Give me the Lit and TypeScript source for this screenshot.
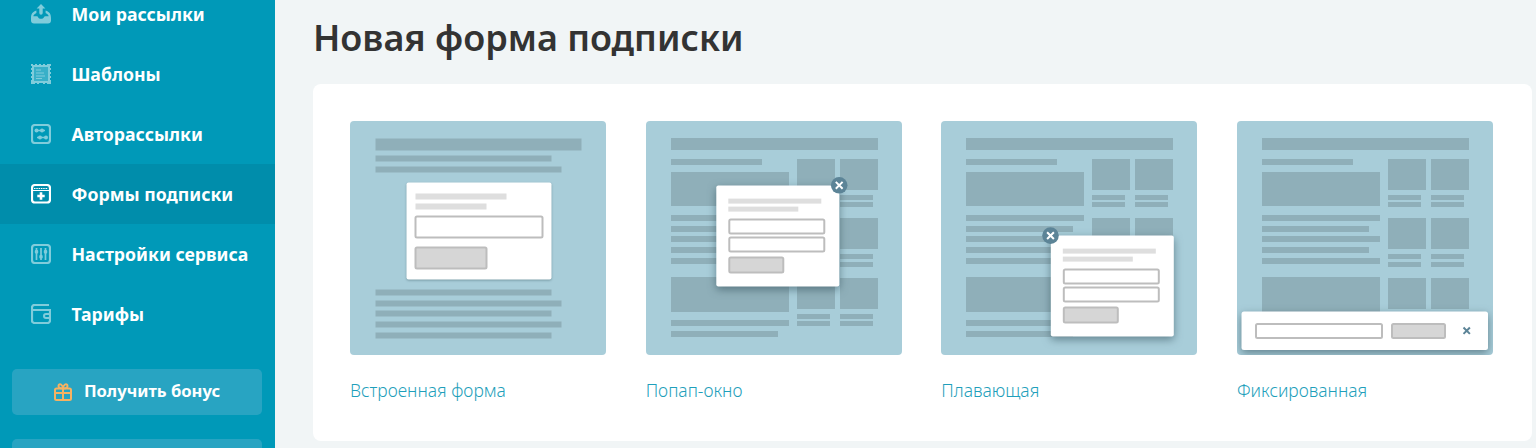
import { LitElement, html, css, svg } from "lit";
import { customElement } from "lit/decorators.js";

type R = [number, number, number, number];
const rects = (cls: string, list: R[]) =>
  list.map(([x, y, w, h]) => svg`<rect class=${cls} x=${x} y=${y} width=${w} height=${h}></rect>`);

const inset = (x: number, y: number, w: number, h: number, cls: string) =>
  svg`<rect class=${cls} x=${x + 1} y=${y + 1} width=${w - 2} height=${h - 2} rx="1.5"></rect>`;

const pageBg = () => [
  rects("blk", [
    [25, 17, 207, 12],
    [25, 38, 91, 6],
    [25, 51, 118, 34],
    [25, 94, 118, 6],
    [25, 105, 107, 6],
    [25, 115, 118, 6],
    [25, 126, 107, 6],
    [25, 137, 118, 6],
    [25, 156, 118, 35],
    [25, 199, 118, 6],
    [25, 210, 107, 6],
    [151, 38, 38, 31],
    [194, 38, 38, 31],
    [151, 74, 33, 5],
    [194, 74, 33, 5],
    [151, 81, 33, 5],
    [194, 81, 33, 5],
    [151, 97, 38, 31],
    [194, 97, 38, 31],
    [151, 133, 33, 5],
    [194, 133, 33, 5],
    [151, 141, 33, 5],
    [194, 141, 33, 5],
    [151, 157, 38, 31],
    [194, 157, 38, 31],
    [151, 193, 33, 5],
    [194, 193, 33, 5],
    [151, 200, 33, 5],
    [194, 200, 33, 5],
  ]),
];

const popup = (dx: number, dy: number, closeX: number, closeY: number) => svg`
  <g transform="translate(${dx} ${dy})">
    <rect class="pane shadow" x="71" y="64" width="123" height="101" rx="2"></rect>
    ${rects("ln", [[83, 77, 93, 5], [83, 85, 70, 5]])}
    ${inset(83, 97, 97, 16, "inp")}
    ${inset(83, 115, 97, 16, "inp")}
    ${inset(83, 135, 56, 17, "btn")}
  </g>
  <circle class="close" cx=${closeX} cy=${closeY} r="8.3"></circle>
  <path class="x-w" d="M${closeX - 3.4} ${closeY - 3.4}l6.8 6.8M${closeX + 3.4} ${closeY - 3.4}l-6.8 6.8"></path>
`;

const thumbs = [
  {
    label: "Встроенная форма",
    art: svg`
      <g transform="translate(.5 .5)">
      ${rects("blk", [
        [25, 17, 206, 12],
        [25, 34, 176, 6],
        [25, 45, 186, 6],
        [25, 168, 176, 6],
        [25, 179, 186, 6],
        [25, 189, 176, 6],
        [25, 200, 186, 6],
        [25, 211, 176, 6],
      ])}
      <rect class="pane shadow-s" x="56" y="61" width="145" height="97" rx="2"></rect>
      ${rects("ln", [[65, 72, 91, 6], [65, 82, 71, 6]])}
      ${inset(64, 94, 129, 23, "inp")}
      ${inset(64, 125, 73, 23, "btn")}
      </g>
    `,
  },
  { label: "Попап-окно", art: svg`${pageBg()}${popup(-0.7, 0.6, 193.2, 64.3)}` },
  { label: "Плавающая", art: svg`${pageBg()}${popup(38.8, 50.6, 109.5, 114.6)}` },
  {
    label: "Фиксированная",
    art: svg`
      ${pageBg()}
      <rect class="pane shadow" x="4.5" y="190.5" width="246.5" height="38.5" rx="2.5"></rect>
      ${inset(18, 202, 128, 16, "inp")}
      ${inset(154, 202, 55, 16, "btn")}
      <path class="x-d" d="M226.5 206.5l6.4 6.4M232.9 206.5l-6.4 6.4"></path>
    `,
  },
];

const icons = {
  send: svg`<path fill="currentColor" d="M10 0l4.400 4.600h-2.700V9a1.700 1.700 0 0 1-3.400 0V4.600H5.600z"/><path fill="currentColor" d="M5.400 6.600v2.500C3.600 10 2.600 11 2.300 12.300h3.300c.8 0 1.200.4 1.500 1 .5 1 1.500 1.500 2.900 1.500s2.400-.5 2.900-1.500c.3-.6.7-1 1.500-1h3.300c-.3-1.300-1.300-2.300-3.100-3.200V6.600c4 1.300 5.400 3.700 5.400 7.400v2.500c0 1.900-1.200 3-3 3H3c-1.800 0-3-1.100-3-3V14c0-3.700 1.400-6.100 5.400-7.400z"/>`,
  stamp: svg`<path fill="currentColor" fill-rule="evenodd" d="M0 0h2v1h2V0h2v1h2V0h2v1h2V0h2v1h2V0h4v2h-1v2h1v2h-1v2h1v2h-1v2h1v2h-1v2h1v4h-4v-1h-2v1h-2v-1H8v1H6v-1H4v1H0v-4h1v-2H0v-2h1v-2H0V8h1V6H0V4h1V2H0zM3 3v14h14V3z"/><rect x="3" y="3" width="14" height="14" fill="currentColor" opacity=".45"/><path fill="none" stroke="currentColor" stroke-width="1.200" d="M5 6h5M5 9h8M5 12h9M5 14.500h6"/>`,
  flow: svg`<rect x="1" y="1" width="18" height="18" rx="3" fill="none" stroke="currentColor" stroke-width="2.200"/><path fill="none" stroke="currentColor" stroke-width="1.500" d="M6 6.500h8M6 13.500h8"/><circle cx="5.500" cy="6.500" r="2" fill="currentColor"/><circle cx="11" cy="6.500" r="2" fill="currentColor"/><circle cx="9" cy="13.500" r="2" fill="currentColor"/><circle cx="15" cy="13.500" r="2" fill="currentColor"/>`,
  form: svg`<rect x="1" y="1" width="18" height="17.500" rx="3" fill="none" stroke="currentColor" stroke-width="2.200"/><path stroke="currentColor" stroke-width="1.200" stroke-dasharray="1.500 .8" d="M3 4.500h14"/><path stroke="currentColor" stroke-width="1" d="M2 6.500h16"/><path fill="currentColor" d="M8.700 8.300h2.600v2.400h2.400v2.600h-2.400v2.400H8.700v-2.400H6.300v-2.600h2.400z"/>`,
  sliders: svg`<rect x="1" y="1" width="18" height="18" rx="3" fill="none" stroke="currentColor" stroke-width="2.200"/><path fill="none" stroke="currentColor" stroke-width="1.700" d="M5.500 4v12M10 4v12M14.500 4v12"/><rect x="3.800" y="6" width="3.400" height="3.500" rx="1" fill="currentColor"/><rect x="8.300" y="11" width="3.400" height="3.500" rx="1" fill="currentColor"/><rect x="12.800" y="6" width="3.400" height="3.500" rx="1" fill="currentColor"/>`,
  wallet: svg`<path fill="none" stroke="currentColor" stroke-width="2.200" d="M18 1H3.500A2.500 2.500 0 0 0 1 3.500v13A2.500 2.500 0 0 0 3.500 19h13a2.500 2.500 0 0 0 2.500-2.500V6H1.500"/><path fill="none" stroke="currentColor" stroke-width="2" d="M19 10h-4a2 2 0 0 0 0 4h4"/>`,
};

const nav = [
  { label: "Мои рассылки", icon: icons.send },
  { label: "Шаблоны", icon: icons.stamp },
  { label: "Авторассылки", icon: icons.flow },
  { label: "Формы подписки", icon: icons.form, active: true },
  { label: "Настройки сервиса", icon: icons.sliders },
  { label: "Тарифы", icon: icons.wallet },
];

@customElement("app-root")
export class AppRoot extends LitElement {
  static styles = css`
    :host {
      display: flex;
      width: 1536px;
      height: 448px;
      overflow: hidden;
      background: #f1f5f6;
      font-family: "Noto Sans", "Open Sans", sans-serif;
    }
    .side {
      flex: 0 0 275px;
      height: 448px;
      overflow: hidden;
      background: #0099b8;
      color: #fff;
    }
    .nav {
      margin-top: -16px;
    }
    .item {
      display: flex;
      align-items: center;
      height: 60px;
      padding-left: 31px;
      gap: 20.500px;
      font-size: 17.700px;
      line-height: 24px;
      font-weight: 700;
    }
    .item.active {
      background: #008dab;
    }
    .item svg {
      width: 20px;
      height: 20px;
      opacity: 0.5;
      flex: none;
    }
    .item.active svg {
      opacity: 1;
    }
    .bonus,
    .next {
      display: flex;
      align-items: center;
      justify-content: center;
      gap: 12px;
      width: 250px;
      height: 46px;
      margin-left: 12px;
      border-radius: 5px;
      background: #28a4c2;
      font-size: 16.600px;
      font-weight: 700;
    }
    .bonus {
      margin-top: 25px;
    }
    .bonus span {
      position: relative;
      top: -2px;
    }
    .next {
      margin-top: 24px;
    }
    .bonus svg {
      width: 18px;
      height: 18px;
    }
    .main {
      flex: 1;
      padding: 0 4px 0 38px;
      min-width: 0;
    }
    h1 {
      margin: 0;
      height: 84px;
      box-sizing: border-box;
      padding-top: 14px;
      font-size: 36px;
      line-height: 48px;
      font-weight: 600;
      color: #333;
    }
    .sheet {
      height: 357px;
      box-sizing: border-box;
      background: #fff;
      border-radius: 8px;
      padding: 37px 39px 0 37px;
      display: grid;
      grid-template-columns: repeat(4, 256px);
      justify-content: space-between;
    }
    .thumb svg {
      display: block;
      width: 256px;
      height: 234px;
      border-radius: 4px;
      background: #a8cdd9;
    }
    .thumb span {
      display: block;
      margin-top: 24px;
      font-size: 17.450px;
      line-height: 22px;
      font-weight: 300;
      color: #1f9fbb;
    }
    svg .blk { fill: #8fafb9; }
    svg .pane { fill: #fff; }
    svg .ln { fill: #dedede; }
    svg .inp { fill: #fff; stroke: #bdbdbd; stroke-width: 2; }
    svg .btn { fill: #d6d6d6; stroke: #bdbdbd; stroke-width: 2; }
    svg .close { fill: #5c8497; }
    svg .x-w { stroke: #fff; stroke-width: 2; fill: none; }
    svg .x-d { stroke: #5c8497; stroke-width: 2; fill: none; }
    svg .shadow { filter: drop-shadow(0 3px 4px rgba(40, 70, 80, 0.55)); }
    svg .shadow-s { filter: drop-shadow(0 1px 1px rgba(40, 70, 80, 0.4)); }
  `;

  render() {
    return html`
      <aside class="side">
        <nav class="nav">
          ${nav.map(
            (n) => html`<div class="item ${n.active ? "active" : ""}">
              <svg viewBox="0 0 20 20">${n.icon}</svg><span>${n.label}</span>
            </div>`
          )}
        </nav>
        <div class="bonus">
          <svg viewBox="0 0 18 18" fill="none" stroke="#f6b262" stroke-width="2">
            <rect x="1" y="5.500" width="16" height="11.500" rx="1.500"></rect>
            <path d="M1 10h16M9 5.500V17M9 5.500C6 5.500 4.500 4.500 4.500 3S6 .9 7 1.500 9 3.500 9 5.500zM9 5.500c3 0 4.500-1 4.500-2.500S12 .9 11 1.500 9 3.500 9 5.500z"></path>
          </svg>
          <span>Получить бонус</span>
        </div>
        <div class="next"></div>
      </aside>
      <main class="main">
        <h1>Новая форма подписки</h1>
        <section class="sheet">
          ${thumbs.map(
            (t) => html`<div class="thumb">
              <svg viewBox="0 0 256 234">${t.art}</svg>
              <span>${t.label}</span>
            </div>`
          )}
        </section>
      </main>
    `;
  }
}
